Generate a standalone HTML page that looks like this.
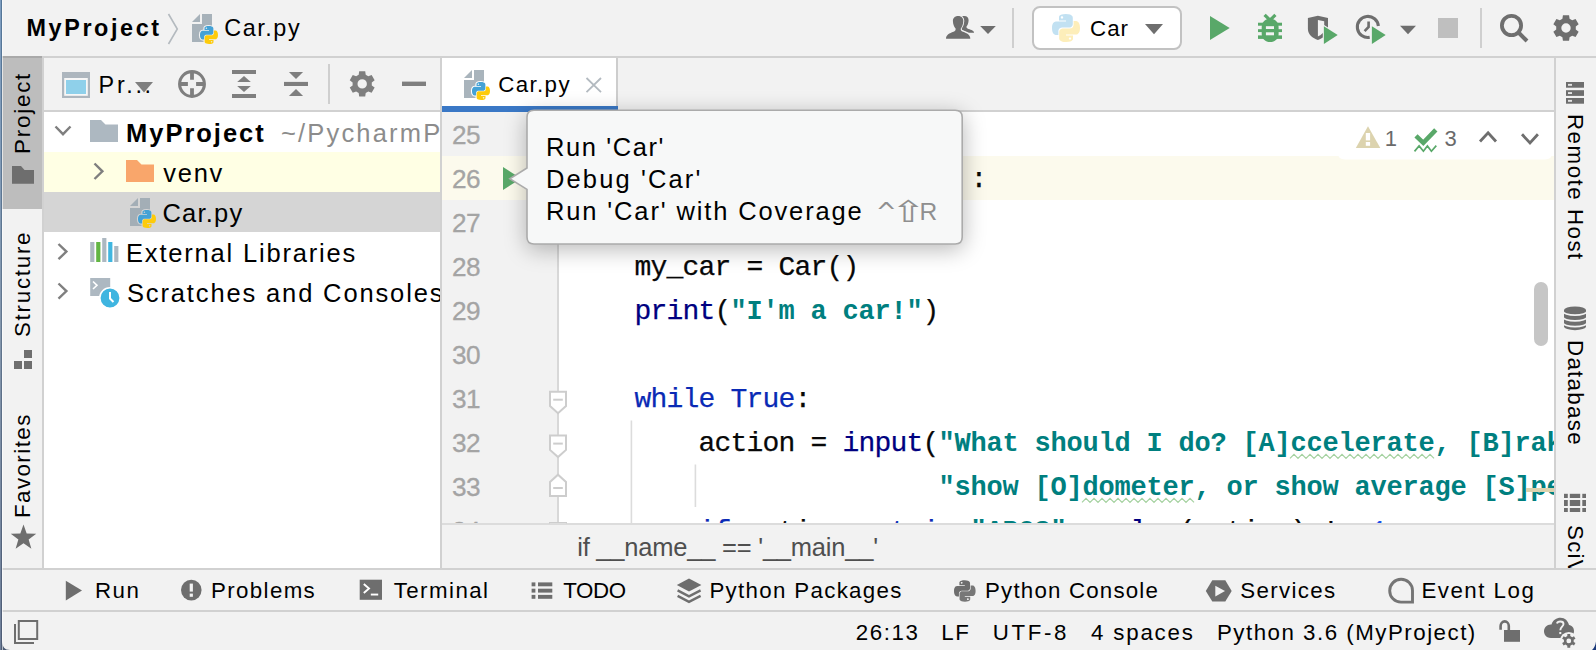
<!DOCTYPE html>
<html>
<head>
<meta charset="utf-8">
<title>Car.py</title>
<style>
*{box-sizing:border-box;margin:0;padding:0}
html,body{width:1596px;height:650px;overflow:hidden;background:#f2f2f2}
body{position:relative;font-family:"Liberation Sans",sans-serif;font-size:25.5px;color:#000}
.abs{position:absolute}
.t{position:absolute;white-space:pre;line-height:60px;height:60px}
svg.layer{position:absolute;left:0;top:0;width:1596px;height:650px;overflow:hidden;pointer-events:none}
#edge{left:0;top:0;width:1px;height:650px;background:linear-gradient(180deg,#7d9dc0,#8497ad 50%,#6f7f99)}
#edge2{left:1px;top:0;width:1px;height:650px;background:linear-gradient(180deg,#557799,#62768e 50%,#4e5c75)}
#edge3{left:2px;top:0;width:1px;height:650px;background:rgba(255,255,255,.6)}
#topline{left:0;top:56px;width:1596px;height:2px;background:#d1d1d1}
#leftline{left:42px;top:58px;width:2px;height:511px;background:#d1d1d1}
#rightline{left:1554px;top:58px;width:2px;height:511px;background:#d1d1d1}
#botline1{left:0;top:568px;width:1596px;height:2px;background:#d1d1d1}
#botline2{left:0;top:610px;width:1596px;height:2px;background:#d1d1d1}
#projtab{left:2px;top:58px;width:40px;height:151px;background:#bdbdbd}
#pp{left:44px;top:58px;width:396px;height:510px;background:#fff;overflow:hidden}
#pphead{left:0;top:0;width:396px;height:54px;background:#f2f2f2;border-bottom:2px solid #d1d1d1}
#ppline{left:440px;top:58px;width:2px;height:510px;background:#d1d1d1}
.row{position:absolute;left:0;width:396px;height:40px}
#ed{left:442px;top:58px;width:1112px;height:466px;background:#fff;overflow:hidden}
#tabs{left:442px;top:58px;width:1112px;height:54px;background:#f2f2f2;border-bottom:2px solid #d1d1d1}
#tab{left:0;top:0;width:176px;height:54px;background:#fff;border-bottom:6px solid #3a78c6}
#tabsep{left:174px;top:0;width:2px;height:48px;background:#cdcdcd}
#gutter{left:0;top:54px;width:117px;height:412px;background:#f2f2f2;border-right:2px solid #d8d8d8}
#curline{left:0;top:98px;width:1112px;height:44px;background:#fcfaed}
#crumbs{left:442px;top:523px;width:1112px;height:45px;background:#f2f2f2;border-top:2px solid #dcdcdc}
#pop{left:528px;top:112px;width:434px;height:131.5px;background:#f7f8f8;border-radius:7px;box-shadow:0 4px 22px 2px rgba(0,0,0,.27)}
#thumb{left:1534px;top:282px;width:14px;height:64px;background:#c6c6c6;border-radius:7px}
#mark{left:1526px;top:488px;width:28px;height:4px;background:#dcd3ae}
.code{position:absolute;left:128.4px;height:44px;line-height:44px;white-space:pre;font-family:"Liberation Mono",monospace;font-size:28px;letter-spacing:-0.8027px;color:#080808;-webkit-text-stroke:0.25px currentColor}
.ln{position:absolute;left:0;height:44px;line-height:44px;white-space:pre;font-family:"Liberation Mono",monospace;font-size:26.67px;color:#a6a6a6}
.kw{color:#0a2ab5}.st{color:#007f7f;font-weight:bold;-webkit-text-stroke:0;font-size:27px;letter-spacing:-0.2026px}.bi{color:#000080}.nu{color:#1750eb}

</style>
</head>
<body>

<div class="abs" id="topline"></div>
<div class="abs" id="projtab"></div><div class="abs" style="left:2px;top:56px;width:40px;height:2px;background:#a9a9a9"></div><div class="abs" id="leftline"></div>
<div class="abs" id="pp"><div class="abs" id="pphead"></div>
<div class="row" style="top:94px;background:#ffffe4"></div>
<div class="row" style="top:134px;background:#d5d5d5"></div>
<span class="t" style="left:54.60px;top:-2.80px;font-size:23.4px;letter-spacing:2.733px;color:#000;">Pr...</span>
<span class="t" style="left:82.00px;top:44.90px;font-size:25.5px;letter-spacing:1.987px;color:#000;font-weight:bold;">MyProject</span>
<span class="t" style="left:236.90px;top:44.90px;font-size:25.5px;letter-spacing:2.189px;color:#8c8c8c;">~/PycharmProjects/MyProject</span>
<span class="t" style="left:119.30px;top:84.90px;font-size:25.5px;letter-spacing:1.700px;color:#000;">venv</span>
<span class="t" style="left:118.40px;top:124.90px;font-size:25.5px;letter-spacing:1.240px;color:#000;">Car.py</span>
<span class="t" style="left:82.00px;top:164.90px;font-size:25.5px;letter-spacing:1.812px;color:#000;">External Libraries</span>
<span class="t" style="left:83.00px;top:204.90px;font-size:25.5px;letter-spacing:1.859px;color:#000;">Scratches and Consoles</span>
</div><div class="abs" id="ppline"></div>
<div class="abs" id="ed"><div class="abs" id="gutter"></div><div class="abs" id="curline"></div>
<span class="t" style="left:10.10px;top:47.20px;font-size:26.2px;letter-spacing:-0.700px;color:#a4a4a4;-webkit-text-stroke:0.3px #a4a4a4;">25</span>
<span class="t" style="left:10.10px;top:91.20px;font-size:26.2px;letter-spacing:-0.700px;color:#a4a4a4;-webkit-text-stroke:0.3px #a4a4a4;">26</span>
<div class="code" style="top:100px"><span class="kw">if</span> __name__ == <span class="st">'__main__<span style="font-weight:normal;position:relative;left:-2px">'</span></span>:</div>
<span class="t" style="left:10.10px;top:135.20px;font-size:26.2px;letter-spacing:-0.700px;color:#a4a4a4;-webkit-text-stroke:0.3px #a4a4a4;">27</span>
<span class="t" style="left:10.10px;top:179.20px;font-size:26.2px;letter-spacing:-0.700px;color:#a4a4a4;-webkit-text-stroke:0.3px #a4a4a4;">28</span>
<div class="code" style="top:188px">    my_car = Car()</div>
<span class="t" style="left:10.10px;top:223.20px;font-size:26.2px;letter-spacing:-0.700px;color:#a4a4a4;-webkit-text-stroke:0.3px #a4a4a4;">29</span>
<div class="code" style="top:232px">    <span class="bi">print</span>(<span class="st">"I'm a car!"</span>)</div>
<span class="t" style="left:10.10px;top:267.20px;font-size:26.2px;letter-spacing:-0.700px;color:#a4a4a4;-webkit-text-stroke:0.3px #a4a4a4;">30</span>
<span class="t" style="left:10.10px;top:311.20px;font-size:26.2px;letter-spacing:-0.700px;color:#a4a4a4;-webkit-text-stroke:0.3px #a4a4a4;">31</span>
<div class="code" style="top:320px">    <span class="kw">while True</span>:</div>
<span class="t" style="left:10.10px;top:355.20px;font-size:26.2px;letter-spacing:-0.700px;color:#a4a4a4;-webkit-text-stroke:0.3px #a4a4a4;">32</span>
<div class="code" style="top:364px">        action = <span class="bi">input</span>(<span class="st">"What should I do? [A]ccelerate, [B]rake, "</span></div>
<span class="t" style="left:10.10px;top:399.20px;font-size:26.2px;letter-spacing:-0.700px;color:#a4a4a4;-webkit-text-stroke:0.3px #a4a4a4;">33</span>
<div class="code" style="top:408px">                       <span class="st">"show [O]dometer, or show average [S]peed?"</span>).upper()</div>
<span class="t" style="left:10.10px;top:443.20px;font-size:26.2px;letter-spacing:-0.700px;color:#a4a4a4;-webkit-text-stroke:0.3px #a4a4a4;">34</span>
<div class="code" style="top:452px">        <span class="kw">if</span> action <span class="kw">not in</span> <span class="st">"ABOS"</span> <span class="kw">or</span> <span class="bi">len</span>(action) != <span class="nu">1</span>:</div>
</div>
<div class="abs" id="tabs"><div class="abs" id="tab"></div><div class="abs" id="tabsep"></div></div>
<span class="t" style="left:498.20px;top:55.00px;font-size:22.3px;letter-spacing:1.380px;color:#000;">Car.py</span>
<div class="abs" id="crumbs"></div>
<span class="t" style="left:577.20px;top:516.70px;font-size:25.5px;letter-spacing:-0.217px;color:#4f4f4f;">if __name__ == '__main__'</span>
<div class="abs" id="thumb"></div><div class="abs" id="mark"></div>
<div class="abs" id="rightline"></div><div class="abs" id="botline1"></div><div class="abs" id="botline2"></div>
<span class="t" style="left:26.50px;top:-2.40px;font-size:23.4px;letter-spacing:2.600px;color:#000;font-weight:bold;">MyProject</span>
<span class="t" style="left:224.30px;top:-2.40px;font-size:23.4px;letter-spacing:1.540px;color:#000;">Car.py</span>
<svg class="layer" viewBox="0 0 1596 650"><defs><clipPath id="edclip"><rect x="442" y="112" width="1112" height="411.5"/></clipPath></defs>
<polyline points="168.5,14 177.3,29 168.5,44" fill="none" stroke="#b4babf" stroke-width="1.6" />
<g fill="#9aa7b0" fill-opacity=".85"><polygon points="202,14 212,14 212,42 192,42 192,24 202,24"/><polygon points="192,22 200,14 200,22"/></g><g transform="translate(198.71,24.71) scale(1.2857)" fill-rule="evenodd"><path d="M7.9,1 C4.3,1 4.5,2.6 4.5,2.6 L4.5,4.2 L8,4.2 L8,4.7 L3.2,4.7 C3.2,4.7 1,4.4 1,8 C1,11.6 3,11.5 3,11.5 L4.2,11.5 L4.2,9.8 C4.2,9.8 4.1,7.8 6.1,7.8 L9.5,7.8 C9.5,7.8 11.4,7.8 11.4,6 L11.4,2.9 C11.4,2.9 11.7,1 7.9,1 Z M6,2.1 C6.3,2.1 6.6,2.4 6.6,2.7 C6.6,3.1 6.3,3.3 6,3.3 C5.6,3.3 5.4,3.1 5.4,2.7 C5.4,2.4 5.6,2.1 6,2.1 Z" fill="#f2f2f2" stroke="#f2f2f2" stroke-width="1.71"/><path d="M8.1,15 C11.7,15 11.5,13.4 11.5,13.4 L11.5,11.8 L8,11.8 L8,11.3 L12.8,11.3 C12.8,11.3 15,11.6 15,8 C15,4.4 13,4.5 13,4.5 L11.8,4.5 L11.8,6.2 C11.8,6.2 11.9,8.2 9.9,8.2 L6.5,8.2 C6.5,8.2 4.6,8.2 4.6,10 L4.6,13.1 C4.6,13.1 4.3,15 8.1,15 Z M10,13.9 C9.7,13.9 9.4,13.6 9.4,13.3 C9.4,12.9 9.7,12.7 10,12.7 C10.4,12.7 10.6,12.9 10.6,13.3 C10.6,13.6 10.4,13.9 10,13.9 Z" fill="#f2f2f2" stroke="#f2f2f2" stroke-width="1.71"/><path d="M7.9,1 C4.3,1 4.5,2.6 4.5,2.6 L4.5,4.2 L8,4.2 L8,4.7 L3.2,4.7 C3.2,4.7 1,4.4 1,8 C1,11.6 3,11.5 3,11.5 L4.2,11.5 L4.2,9.8 C4.2,9.8 4.1,7.8 6.1,7.8 L9.5,7.8 C9.5,7.8 11.4,7.8 11.4,6 L11.4,2.9 C11.4,2.9 11.7,1 7.9,1 Z M6,2.1 C6.3,2.1 6.6,2.4 6.6,2.7 C6.6,3.1 6.3,3.3 6,3.3 C5.6,3.3 5.4,3.1 5.4,2.7 C5.4,2.4 5.6,2.1 6,2.1 Z" fill="#44a2d6"/><path d="M8.1,15 C11.7,15 11.5,13.4 11.5,13.4 L11.5,11.8 L8,11.8 L8,11.3 L12.8,11.3 C12.8,11.3 15,11.6 15,8 C15,4.4 13,4.5 13,4.5 L11.8,4.5 L11.8,6.2 C11.8,6.2 11.9,8.2 9.9,8.2 L6.5,8.2 C6.5,8.2 4.6,8.2 4.6,10 L4.6,13.1 C4.6,13.1 4.3,15 8.1,15 Z M10,13.9 C9.7,13.9 9.4,13.6 9.4,13.3 C9.4,12.9 9.7,12.7 10,12.7 C10.4,12.7 10.6,12.9 10.6,13.3 C10.6,13.6 10.4,13.9 10,13.9 Z" fill="#fdcb0b"/></g>
<path d="M962,16.4 C966.5,15.3 968.8,17.5 968.6,20.5 C968.4,23.5 967.5,25.5 966.5,26.5 C966.3,28 967,28.4 968.5,29 C971.5,30 974.1,30.8 974.1,32.7 L969,32.7 L960,29 Z" fill="#6e6e6e"/><path d="M958.2,16 C961.5,16 963.4,18.2 963.3,21 C963.2,24.5 962,27 960.8,28.5 C960.5,30.5 961.2,31 963,31.8 C967,33.3 970.3,34.8 970.3,38.7 L946,38.7 C946,34.8 949.5,33.3 953.5,31.8 C955.2,31 955.8,30.5 955.6,28.5 C954.2,27 953,24.5 952.9,21 C952.8,18.2 954.8,16 958.2,16 Z" fill="#f2f2f2" stroke="#f2f2f2" stroke-width="2"/><path d="M958.2,16 C961.5,16 963.4,18.2 963.3,21 C963.2,24.5 962,27 960.8,28.5 C960.5,30.5 961.2,31 963,31.8 C967,33.3 970.3,34.8 970.3,38.7 L946,38.7 C946,34.8 949.5,33.3 953.5,31.8 C955.2,31 955.8,30.5 955.6,28.5 C954.2,27 953,24.5 952.9,21 C952.8,18.2 954.8,16 958.2,16 Z" fill="#6e6e6e"/>
<polygon points="980.2,26 995.8,26 988,33.9" fill="#6e6e6e" />
<rect x="1012" y="8" width="2" height="40" fill="#cfcfcf" />
<rect x="1033" y="7" width="148" height="42" rx="7" fill="#fff" stroke="#c2c2c2" stroke-width="2"/>
<g transform="translate(1050.00,12.00) scale(2.0000)" fill-rule="evenodd"><path d="M7.9,1 C4.3,1 4.5,2.6 4.5,2.6 L4.5,4.2 L8,4.2 L8,4.7 L3.2,4.7 C3.2,4.7 1,4.4 1,8 C1,11.6 3,11.5 3,11.5 L4.2,11.5 L4.2,9.8 C4.2,9.8 4.1,7.8 6.1,7.8 L9.5,7.8 C9.5,7.8 11.4,7.8 11.4,6 L11.4,2.9 C11.4,2.9 11.7,1 7.9,1 Z M6,2.1 C6.3,2.1 6.6,2.4 6.6,2.7 C6.6,3.1 6.3,3.3 6,3.3 C5.6,3.3 5.4,3.1 5.4,2.7 C5.4,2.4 5.6,2.1 6,2.1 Z" fill="#c2e1f2"/><path d="M8.1,15 C11.7,15 11.5,13.4 11.5,13.4 L11.5,11.8 L8,11.8 L8,11.3 L12.8,11.3 C12.8,11.3 15,11.6 15,8 C15,4.4 13,4.5 13,4.5 L11.8,4.5 L11.8,6.2 C11.8,6.2 11.9,8.2 9.9,8.2 L6.5,8.2 C6.5,8.2 4.6,8.2 4.6,10 L4.6,13.1 C4.6,13.1 4.3,15 8.1,15 Z M10,13.9 C9.7,13.9 9.4,13.6 9.4,13.3 C9.4,12.9 9.7,12.7 10,12.7 C10.4,12.7 10.6,12.9 10.6,13.3 C10.6,13.6 10.4,13.9 10,13.9 Z" fill="#fdeeba"/></g>
<polygon points="1145,24 1163,24 1154,34.2" fill="#6e6e6e" />
<polygon points="1210,16 1229.7,28 1210,40" fill="#59a869" />
<g fill="#59a869"><path d="M1264.6,14.8 L1270,20.2 M1275.4,14.8 L1270,20.2" stroke="#59a869" stroke-width="3.2" fill="none"/><path d="M1261.7,27 C1261.7,22 1265.4,18.7 1270.1,18.7 C1274.9,18.7 1278.6,22 1278.6,27 L1278.6,34 C1278.6,38.7 1274.9,42.1 1270.1,42.1 C1265.4,42.1 1261.7,38.7 1261.7,34Z"/><rect x="1258" y="22.7" width="24" height="3"/><rect x="1258" y="29.2" width="24" height="2.9"/><rect x="1258" y="35.4" width="24" height="3.5"/></g><rect x="1265.9" y="26.2" width="8.1" height="2.8" fill="#f2f2f2"/><rect x="1265.9" y="32.3" width="8.1" height="3" fill="#f2f2f2"/>
<path fill-rule="evenodd" d="M1307.9,18 L1317.9,15.8 L1328,18 L1328,29 C1328,34.5 1323,38.3 1317.9,40 C1312.8,38.3 1307.9,34.5 1307.9,29 Z M1317.9,19.9 L1324.2,21.2 L1324.2,29 C1324.2,32.5 1321.5,35 1317.9,36.4 Z" fill="#6e6e6e"/>
<polygon points="1323.9,26.2 1337.7,35 1323.9,44" fill="#59a869" stroke="#f2f2f2" stroke-width="2.2" paint-order="stroke"/>
<path d="M1378.4,26 A10.55,10.55 0 1 0 1369.7,37.3" fill="none" stroke="#6e6e6e" stroke-width="3.1"/>
<polyline points="1368.6,21.5 1368.6,27 1364.6,31.2" fill="none" stroke="#6e6e6e" stroke-width="2.6" />
<polygon points="1371.9,26.2 1385.7,35 1371.9,44" fill="#59a869" stroke="#f2f2f2" stroke-width="2.2" paint-order="stroke"/>
<polygon points="1400,25.7 1416,25.7 1408,34.2" fill="#6e6e6e" />
<rect x="1438" y="18" width="20" height="20" fill="#bfbfbf" />
<rect x="1480" y="8" width="2" height="40" fill="#cfcfcf" />
<circle cx="1511.5" cy="25.5" r="9.6" fill="none" stroke="#6e6e6e" stroke-width="3.8"/><line x1="1518.5" y1="32.5" x2="1527" y2="41" stroke="#6e6e6e" stroke-width="4"/>
<path d="M1569.58,18.77 L1569.07,15.16 L1562.93,15.16 L1562.42,18.77 L1559.80,20.28 L1556.42,18.92 L1553.35,24.24 L1556.22,26.49 L1556.22,29.51 L1553.35,31.76 L1556.42,37.08 L1559.80,35.72 L1562.42,37.23 L1562.93,40.84 L1569.07,40.84 L1569.58,37.23 L1572.20,35.72 L1575.58,37.08 L1578.65,31.76 L1575.78,29.51 L1575.78,26.49 L1578.65,24.24 L1575.58,18.92 L1572.20,20.28Z M1561.30,28.00 a4.7,4.7 0 1,0 9.4,0 a4.7,4.7 0 1,0 -9.4,0Z" fill="#6e6e6e" fill-rule="evenodd"/>
<rect x="62" y="72" width="28" height="26" fill="#adb6be" /><rect x="64.2" y="78" width="23.6" height="17.8" fill="#f7f7f7" /><rect x="66" y="80" width="20" height="14" fill="#8fd0ea" />
<polygon points="135,82 153,82 144,92.5" fill="#7f7f7f" />
<circle cx="192" cy="84" r="12.4" fill="none" stroke="#7f7f7f" stroke-width="3.1"/><path d="M192,72 V79.7 M192,96 V88.3 M180,84 H187.9 M204,84 H196.1" stroke="#7f7f7f" stroke-width="3.8"/>
<rect x="232" y="70" width="24" height="4" fill="#7f7f7f" /><rect x="232" y="94" width="24" height="4" fill="#7f7f7f" /><polygon points="244,75.9 250.8,81.9 237.2,81.9" fill="#7f7f7f" /><polygon points="237.2,86 250.8,86 244,92.1" fill="#7f7f7f" />
<rect x="284" y="81.9" width="24" height="4.1" fill="#7f7f7f" /><polygon points="288.9,71.9 303.1,71.9 296,79.1" fill="#7f7f7f" /><polygon points="296,89.1 303.1,96 288.9,96" fill="#7f7f7f" />
<rect x="328" y="64" width="2" height="40" fill="#cfcfcf" />
<path d="M365.71,74.86 L365.23,71.26 L359.17,71.26 L358.69,74.86 L356.12,76.34 L352.76,74.96 L349.74,80.20 L352.61,82.42 L352.61,85.38 L349.74,87.60 L352.76,92.84 L356.12,91.46 L358.69,92.94 L359.17,96.54 L365.23,96.54 L365.71,92.94 L368.28,91.46 L371.64,92.84 L374.66,87.60 L371.79,85.38 L371.79,82.42 L374.66,80.20 L371.64,74.96 L368.28,76.34Z M357.50,83.90 a4.7,4.7 0 1,0 9.4,0 a4.7,4.7 0 1,0 -9.4,0Z" fill="#7f7f7f" fill-rule="evenodd"/>
<rect x="402" y="81.6" width="24" height="4.4" fill="#7f7f7f" />
<polyline points="55.5,126.5 63,134.2 70.5,126.5" fill="none" stroke="#7f7f7f" stroke-width="2.4" />
<path d="M90,120 L101,120 L105.5,124.6 L118,124.6 L118,142 L90,142Z" fill="#adb8c1"/>
<polyline points="94.5,163.5 102.4,171.3 94.5,179" fill="none" stroke="#7f7f7f" stroke-width="2.4" />
<path d="M126,160 L137,160 L141.5,164.6 L154,164.6 L154,182 L126,182Z" fill="#f9a66b"/>
<g fill="#9aa7b0" fill-opacity=".85"><polygon points="140,198 150,198 150,226 130,226 130,208 140,208"/><polygon points="130,206 138,198 138,206"/></g><g transform="translate(136.71,208.71) scale(1.2857)" fill-rule="evenodd"><path d="M7.9,1 C4.3,1 4.5,2.6 4.5,2.6 L4.5,4.2 L8,4.2 L8,4.7 L3.2,4.7 C3.2,4.7 1,4.4 1,8 C1,11.6 3,11.5 3,11.5 L4.2,11.5 L4.2,9.8 C4.2,9.8 4.1,7.8 6.1,7.8 L9.5,7.8 C9.5,7.8 11.4,7.8 11.4,6 L11.4,2.9 C11.4,2.9 11.7,1 7.9,1 Z M6,2.1 C6.3,2.1 6.6,2.4 6.6,2.7 C6.6,3.1 6.3,3.3 6,3.3 C5.6,3.3 5.4,3.1 5.4,2.7 C5.4,2.4 5.6,2.1 6,2.1 Z" fill="#d5d5d5" stroke="#d5d5d5" stroke-width="1.71"/><path d="M8.1,15 C11.7,15 11.5,13.4 11.5,13.4 L11.5,11.8 L8,11.8 L8,11.3 L12.8,11.3 C12.8,11.3 15,11.6 15,8 C15,4.4 13,4.5 13,4.5 L11.8,4.5 L11.8,6.2 C11.8,6.2 11.9,8.2 9.9,8.2 L6.5,8.2 C6.5,8.2 4.6,8.2 4.6,10 L4.6,13.1 C4.6,13.1 4.3,15 8.1,15 Z M10,13.9 C9.7,13.9 9.4,13.6 9.4,13.3 C9.4,12.9 9.7,12.7 10,12.7 C10.4,12.7 10.6,12.9 10.6,13.3 C10.6,13.6 10.4,13.9 10,13.9 Z" fill="#d5d5d5" stroke="#d5d5d5" stroke-width="1.71"/><path d="M7.9,1 C4.3,1 4.5,2.6 4.5,2.6 L4.5,4.2 L8,4.2 L8,4.7 L3.2,4.7 C3.2,4.7 1,4.4 1,8 C1,11.6 3,11.5 3,11.5 L4.2,11.5 L4.2,9.8 C4.2,9.8 4.1,7.8 6.1,7.8 L9.5,7.8 C9.5,7.8 11.4,7.8 11.4,6 L11.4,2.9 C11.4,2.9 11.7,1 7.9,1 Z M6,2.1 C6.3,2.1 6.6,2.4 6.6,2.7 C6.6,3.1 6.3,3.3 6,3.3 C5.6,3.3 5.4,3.1 5.4,2.7 C5.4,2.4 5.6,2.1 6,2.1 Z" fill="#44a2d6"/><path d="M8.1,15 C11.7,15 11.5,13.4 11.5,13.4 L11.5,11.8 L8,11.8 L8,11.3 L12.8,11.3 C12.8,11.3 15,11.6 15,8 C15,4.4 13,4.5 13,4.5 L11.8,4.5 L11.8,6.2 C11.8,6.2 11.9,8.2 9.9,8.2 L6.5,8.2 C6.5,8.2 4.6,8.2 4.6,10 L4.6,13.1 C4.6,13.1 4.3,15 8.1,15 Z M10,13.9 C9.7,13.9 9.4,13.6 9.4,13.3 C9.4,12.9 9.7,12.7 10,12.7 C10.4,12.7 10.6,12.9 10.6,13.3 C10.6,13.6 10.4,13.9 10,13.9 Z" fill="#fdcb0b"/></g>
<polyline points="58.5,244 66.4,251.6 58.5,259.2" fill="none" stroke="#7f7f7f" stroke-width="2.4" />
<polyline points="58.5,283.5 66.4,291.1 58.5,298.7" fill="none" stroke="#7f7f7f" stroke-width="2.4" />
<rect x="90.2" y="242" width="4.2" height="20" fill="#adb8c1" /><rect x="96.2" y="242" width="4.2" height="20" fill="#62b543" /><rect x="102.2" y="238" width="4.2" height="24" fill="#adb8c1" /><rect x="108.2" y="242" width="4.2" height="20" fill="#40b6e0" /><rect x="114.2" y="246" width="4.2" height="16" fill="#adb8c1" />
<rect x="90.2" y="278" width="20" height="18" fill="#adb8c1" /><polyline points="93,281.5 97,285.3 93,289" fill="none" stroke="#fff" stroke-width="1.6" />
<circle cx="110" cy="298" r="10.2" fill="#3fb5e0" stroke="#fff" stroke-width="1.6"/><polyline points="110,292 110,298.5 113.5,302" fill="none" stroke="#fff" stroke-width="2" />
<g fill="#9aa7b0" fill-opacity=".85"><polygon points="474,70 484,70 484,98 464,98 464,80 474,80"/><polygon points="464,78 472,70 472,78"/></g><g transform="translate(470.71,80.71) scale(1.2857)" fill-rule="evenodd"><path d="M7.9,1 C4.3,1 4.5,2.6 4.5,2.6 L4.5,4.2 L8,4.2 L8,4.7 L3.2,4.7 C3.2,4.7 1,4.4 1,8 C1,11.6 3,11.5 3,11.5 L4.2,11.5 L4.2,9.8 C4.2,9.8 4.1,7.8 6.1,7.8 L9.5,7.8 C9.5,7.8 11.4,7.8 11.4,6 L11.4,2.9 C11.4,2.9 11.7,1 7.9,1 Z M6,2.1 C6.3,2.1 6.6,2.4 6.6,2.7 C6.6,3.1 6.3,3.3 6,3.3 C5.6,3.3 5.4,3.1 5.4,2.7 C5.4,2.4 5.6,2.1 6,2.1 Z" fill="#fff" stroke="#fff" stroke-width="1.71"/><path d="M8.1,15 C11.7,15 11.5,13.4 11.5,13.4 L11.5,11.8 L8,11.8 L8,11.3 L12.8,11.3 C12.8,11.3 15,11.6 15,8 C15,4.4 13,4.5 13,4.5 L11.8,4.5 L11.8,6.2 C11.8,6.2 11.9,8.2 9.9,8.2 L6.5,8.2 C6.5,8.2 4.6,8.2 4.6,10 L4.6,13.1 C4.6,13.1 4.3,15 8.1,15 Z M10,13.9 C9.7,13.9 9.4,13.6 9.4,13.3 C9.4,12.9 9.7,12.7 10,12.7 C10.4,12.7 10.6,12.9 10.6,13.3 C10.6,13.6 10.4,13.9 10,13.9 Z" fill="#fff" stroke="#fff" stroke-width="1.71"/><path d="M7.9,1 C4.3,1 4.5,2.6 4.5,2.6 L4.5,4.2 L8,4.2 L8,4.7 L3.2,4.7 C3.2,4.7 1,4.4 1,8 C1,11.6 3,11.5 3,11.5 L4.2,11.5 L4.2,9.8 C4.2,9.8 4.1,7.8 6.1,7.8 L9.5,7.8 C9.5,7.8 11.4,7.8 11.4,6 L11.4,2.9 C11.4,2.9 11.7,1 7.9,1 Z M6,2.1 C6.3,2.1 6.6,2.4 6.6,2.7 C6.6,3.1 6.3,3.3 6,3.3 C5.6,3.3 5.4,3.1 5.4,2.7 C5.4,2.4 5.6,2.1 6,2.1 Z" fill="#44a2d6"/><path d="M8.1,15 C11.7,15 11.5,13.4 11.5,13.4 L11.5,11.8 L8,11.8 L8,11.3 L12.8,11.3 C12.8,11.3 15,11.6 15,8 C15,4.4 13,4.5 13,4.5 L11.8,4.5 L11.8,6.2 C11.8,6.2 11.9,8.2 9.9,8.2 L6.5,8.2 C6.5,8.2 4.6,8.2 4.6,10 L4.6,13.1 C4.6,13.1 4.3,15 8.1,15 Z M10,13.9 C9.7,13.9 9.4,13.6 9.4,13.3 C9.4,12.9 9.7,12.7 10,12.7 C10.4,12.7 10.6,12.9 10.6,13.3 C10.6,13.6 10.4,13.9 10,13.9 Z" fill="#fdcb0b"/></g>
<path d="M586.5,78 L601,92.2 M601,78 L586.5,92.2" stroke="#b3bac0" stroke-width="1.8" fill="none"/>
<polygon points="503,167 521,178.5 503,190" fill="#59a869" />
<g clip-path="url(#edclip)">
<path d="M550,391.7 L566,391.7 L566,406.0 L558,413.2 L550,406.0Z" fill="#fff" stroke="#cdcdcd" stroke-width="2"/><line x1="553.2" y1="399.7" x2="562.8" y2="399.7" stroke="#cdcdcd" stroke-width="2"/><path d="M550,435.6 L566,435.6 L566,449.90000000000003 L558,457.1 L550,449.90000000000003Z" fill="#fff" stroke="#cdcdcd" stroke-width="2"/><line x1="553.2" y1="443.6" x2="562.8" y2="443.6" stroke="#cdcdcd" stroke-width="2"/><path d="M550,496 L566,496 L566,482 L558,474.7 L550,482Z" fill="#fff" stroke="#cdcdcd" stroke-width="2"/><line x1="553.2" y1="488" x2="562.8" y2="488" stroke="#cdcdcd" stroke-width="2"/><path d="M550,523 L566,523 L566,537.3 L558,544.5 L550,537.3Z" fill="#fff" stroke="#cdcdcd" stroke-width="2"/><line x1="553.2" y1="531" x2="562.8" y2="531" stroke="#cdcdcd" stroke-width="2"/>
<rect x="630.6" y="420.5" width="1.6" height="103" fill="#dcdcdc" /><rect x="694.6" y="464.5" width="1.6" height="42.5" fill="#dcdcdc" />
<polyline points="1290,458.4 1294,454.4 1298,458.4 1302,454.4 1306,458.4 1310,454.4 1314,458.4 1318,454.4 1322,458.4 1326,454.4 1330,458.4 1334,454.4 1338,458.4 1342,454.4 1346,458.4 1350,454.4 1354,458.4 1358,454.4 1362,458.4 1366,454.4 1370,458.4 1374,454.4 1378,458.4 1382,454.4 1386,458.4 1390,454.4 1394,458.4 1398,454.4 1402,458.4 1406,454.4 1410,458.4 1414,454.4 1418,458.4 1422,454.4 1426,458.4 1430,454.4 1434,458.4" fill="none" stroke="#a5d2a0" stroke-width="1.2" />
<polyline points="1082,502.4 1086,498.4 1090,502.4 1094,498.4 1098,502.4 1102,498.4 1106,502.4 1110,498.4 1114,502.4 1118,498.4 1122,502.4 1126,498.4 1130,502.4 1134,498.4 1138,502.4 1142,498.4 1146,502.4 1150,498.4 1154,502.4 1158,498.4 1162,502.4 1166,498.4 1170,502.4 1174,498.4 1178,502.4 1182,498.4 1186,502.4 1190,498.4 1194,502.4" fill="none" stroke="#a5d2a0" stroke-width="1.2" />
</g>
<path d="M1338,112 L1552,112 L1552,153 Q1552,159.5 1545,159.5 L1345,159.5 Q1338,159.5 1338,153Z" fill="#fff"/>
<polygon points="1368,126.2 1380.3,147.9 1355.8,147.9" fill="#dcd3ae" />
<rect x="1365.8" y="133" width="4.3" height="7.4" fill="#fff" /><rect x="1365.8" y="142" width="4.3" height="3.8" fill="#fff" />
<polyline points="1416,135.9 1423.3,142.8 1435.8,129.9" fill="none" stroke="#59a869" stroke-width="4.6" />
<polyline points="1414.5,151.4 1419.1,145.9 1423.4,151.2 1427.4,145.9 1431.4,151.2 1436.3,145.6" fill="none" stroke="#59a869" stroke-width="1.7" />
<polyline points="1480,141.5 1488.1,132.8 1496,141.5" fill="none" stroke="#6e6e6e" stroke-width="2.8" />
<polyline points="1522,134.3 1530,143 1537.9,134.3" fill="none" stroke="#6e6e6e" stroke-width="2.8" />
<path d="M12,166 L21,166 L24.5,170 L34,170 L34,183.8 L12,183.8Z" fill="#6e6e6e"/>
<rect x="14" y="361" width="8" height="8" fill="#6e6e6e" /><rect x="24" y="361" width="8" height="8" fill="#6e6e6e" /><rect x="24" y="350" width="8" height="8" fill="#6e6e6e" />
<polygon points="23.5,524.4 26.67,533.43 36.24,533.66 28.64,539.47 31.38,548.64 23.5,543.2 15.62,548.64 18.36,539.47 10.76,533.66 20.33,533.43" fill="#6e6e6e" />
<rect x="1566" y="82" width="18" height="5.7" fill="#6e6e6e" /><rect x="1568" y="83.9" width="4" height="1.9" fill="#e4e4e4" />
<rect x="1566" y="90.2" width="18" height="5.7" fill="#6e6e6e" /><rect x="1568" y="92.10000000000001" width="4" height="1.9" fill="#e4e4e4" />
<rect x="1566" y="98" width="18" height="5.7" fill="#6e6e6e" /><rect x="1568" y="99.9" width="4" height="1.9" fill="#e4e4e4" />
<path d="M1564,310 L1564,326.5 A11,3.7 0 0 0 1586,326.5 L1586,310Z" fill="#6e6e6e"/><ellipse cx="1575" cy="309.9" rx="11" ry="3.5" fill="#6e6e6e"/>
<path d="M1563,311.2 A12,3.9 0 0 0 1587,311.2" fill="none" stroke="#f2f2f2" stroke-width="1.7"/>
<path d="M1563,317.0 A12,3.9 0 0 0 1587,317.0" fill="none" stroke="#f2f2f2" stroke-width="1.7"/>
<path d="M1563,322.8 A12,3.9 0 0 0 1587,322.8" fill="none" stroke="#f2f2f2" stroke-width="1.7"/>
<rect x="1564" y="493.8" width="3.8" height="4.2" fill="#6e6e6e" />
<rect x="1564" y="500" width="3.8" height="6" fill="#6e6e6e" />
<rect x="1564" y="508" width="3.8" height="4" fill="#6e6e6e" />
<rect x="1569.8" y="493.8" width="10.4" height="4.2" fill="#6e6e6e" />
<rect x="1569.8" y="500" width="10.4" height="6" fill="#6e6e6e" />
<rect x="1569.8" y="508" width="10.4" height="4" fill="#6e6e6e" />
<rect x="1582.3" y="493.8" width="3.7" height="4.2" fill="#6e6e6e" />
<rect x="1582.3" y="500" width="3.7" height="6" fill="#6e6e6e" />
<rect x="1582.3" y="508" width="3.7" height="4" fill="#6e6e6e" />
<polygon points="65.8,580.8 82,590.6 65.8,600.5" fill="#6e6e6e" />
<circle cx="191.3" cy="590.1" r="10.3" fill="#6e6e6e"/><rect x="189.7" y="583.6" width="3.2" height="8" fill="#f2f2f2" /><rect x="189.7" y="593.6" width="3.2" height="3.2" fill="#f2f2f2" />
<rect x="359.7" y="579.7" width="22.3" height="20.1" fill="#6e6e6e" /><polyline points="363.8,584 369,588.5 363.8,593" fill="none" stroke="#fff" stroke-width="1.9" /><rect x="370.8" y="593.6" width="7.4" height="1.9" fill="#fff" />
<rect x="531.6" y="582.4" width="3.8" height="3.9" fill="#6e6e6e" /><rect x="538" y="582.4" width="14.3" height="3.9" fill="#6e6e6e" />
<rect x="531.6" y="588.7" width="3.8" height="3.9" fill="#6e6e6e" /><rect x="538" y="588.7" width="14.3" height="3.9" fill="#6e6e6e" />
<rect x="531.6" y="594.9" width="3.8" height="3.9" fill="#6e6e6e" /><rect x="538" y="594.9" width="14.3" height="3.9" fill="#6e6e6e" />
<polygon points="689,578.6 701.4,585 689,591.4 676.8,585" fill="#6e6e6e" />
<polyline points="677.6,590.4 689,596.3 700.6,590.4" fill="none" stroke="#6e6e6e" stroke-width="2.4" /><polyline points="677.6,595.9 689,601.8 700.6,595.9" fill="none" stroke="#6e6e6e" stroke-width="2.4" />
<g transform="translate(952.46,578.66) scale(1.5429)" fill-rule="evenodd"><path d="M7.9,1 C4.3,1 4.5,2.6 4.5,2.6 L4.5,4.2 L8,4.2 L8,4.7 L3.2,4.7 C3.2,4.7 1,4.4 1,8 C1,11.6 3,11.5 3,11.5 L4.2,11.5 L4.2,9.8 C4.2,9.8 4.1,7.8 6.1,7.8 L9.5,7.8 C9.5,7.8 11.4,7.8 11.4,6 L11.4,2.9 C11.4,2.9 11.7,1 7.9,1 Z M6,2.1 C6.3,2.1 6.6,2.4 6.6,2.7 C6.6,3.1 6.3,3.3 6,3.3 C5.6,3.3 5.4,3.1 5.4,2.7 C5.4,2.4 5.6,2.1 6,2.1 Z" fill="#6e6e6e"/><path d="M8.1,15 C11.7,15 11.5,13.4 11.5,13.4 L11.5,11.8 L8,11.8 L8,11.3 L12.8,11.3 C12.8,11.3 15,11.6 15,8 C15,4.4 13,4.5 13,4.5 L11.8,4.5 L11.8,6.2 C11.8,6.2 11.9,8.2 9.9,8.2 L6.5,8.2 C6.5,8.2 4.6,8.2 4.6,10 L4.6,13.1 C4.6,13.1 4.3,15 8.1,15 Z M10,13.9 C9.7,13.9 9.4,13.6 9.4,13.3 C9.4,12.9 9.7,12.7 10,12.7 C10.4,12.7 10.6,12.9 10.6,13.3 C10.6,13.6 10.4,13.9 10,13.9 Z" fill="#777"/></g>
<polygon points="1205.8,591 1212.3,580.2 1225.3,580.2 1231.7,591 1225.3,601.6 1212.3,601.6" fill="#6e6e6e" /><polygon points="1215.3,585.8 1225,591.1 1215.3,596.5" fill="#f2f2f2" />
<path d="M1412.5,602.1 L1401,602.1 A11.4,11.4 0 1 1 1412.5,590.6Z" fill="none" stroke="#757575" stroke-width="2.9"/>
<rect x="18.8" y="621" width="18.4" height="18" fill="none" stroke="#6e6e6e" stroke-width="2"/><polyline points="15,624 15,643 34,643" fill="none" stroke="#6e6e6e" stroke-width="2" />
<rect x="1504" y="630" width="16" height="11.8" fill="#6e6e6e" /><path d="M1500.6,629.8 L1500.6,626 A4.1,4.6 0 0 1 1508.8,626 L1508.8,631" fill="none" stroke="#6e6e6e" stroke-width="2.6"/>
<path d="M1551,638 C1545.5,638 1544,633.5 1544,631.5 C1544,627 1547.5,624 1551.5,624.5 C1553,620 1556.5,617.8 1560.5,617.8 C1565,617.8 1568,621 1569,625 C1572,625.3 1574,628 1574,631 C1574,635 1571,638 1567.5,638Z" fill="#6e6e6e"/>
<path d="M1557,623.5 C1557.5,621 1563.5,620.6 1563.5,624 C1563.5,626.5 1560.3,627 1560.3,630.3" fill="none" stroke="#f2f2f2" stroke-width="1.9"/><rect x="1559.3" y="632" width="2" height="2.1" fill="#f2f2f2"/>
<circle cx="1568.8" cy="640.9" r="9" fill="#f2f2f2"/><path d="M1570.28,636.12 L1570.26,634.05 L1567.34,634.05 L1567.32,636.12 L1565.40,637.23 L1563.60,636.21 L1562.14,638.74 L1563.92,639.79 L1563.92,642.01 L1562.14,643.06 L1563.60,645.59 L1565.40,644.57 L1567.32,645.68 L1567.34,647.75 L1570.26,647.75 L1570.28,645.68 L1572.20,644.57 L1574.00,645.59 L1575.46,643.06 L1573.68,642.01 L1573.68,639.79 L1575.46,638.74 L1574.00,636.21 L1572.20,637.23Z M1566.40,640.90 a2.4,2.4 0 1,0 4.8,0 a2.4,2.4 0 1,0 -4.8,0Z" fill="#6e6e6e" fill-rule="evenodd"/>
<path d="M0,640 L0,650 L10,650 C5,650 2,647 2,640Z" fill="#4d5b73"/>
<path d="M1596,641.5 L1596,650 L1592,650 C1594,648 1595.5,645.5 1596,641.5Z" fill="#1b3a7a"/>
</svg>
<span class="t" style="left:1090.10px;top:-1.20px;font-size:22.3px;letter-spacing:0.950px;color:#000;">Car</span>
<span class="t" style="left:1384.80px;top:108.80px;font-size:22px;letter-spacing:0.000px;color:#6a6a6a;">1</span>
<span class="t" style="left:1444.40px;top:109.00px;font-size:22px;letter-spacing:0.000px;color:#6a6a6a;">3</span>
<span class="t" style="left:-6.60px;top:154.20px;font-size:22.3px;letter-spacing:1.817px;color:#000;transform-origin:0 0;transform:rotate(-90deg);">Project</span>
<span class="t" style="left:-6.60px;top:337.00px;font-size:22.3px;letter-spacing:1.750px;color:#000;transform-origin:0 0;transform:rotate(-90deg);">Structure</span>
<span class="t" style="left:-6.60px;top:517.60px;font-size:22.3px;letter-spacing:1.450px;color:#000;transform-origin:0 0;transform:rotate(-90deg);">Favorites</span>
<span class="t" style="left:1604.70px;top:113.60px;font-size:22.3px;letter-spacing:1.520px;color:#000;transform-origin:0 0;transform:rotate(90deg);">Remote Host</span>
<span class="t" style="left:1604.70px;top:339.80px;font-size:22.3px;letter-spacing:1.300px;color:#000;transform-origin:0 0;transform:rotate(90deg);">Database</span>
<div class="abs" style="left:1556px;top:500px;width:40px;height:68px;overflow:hidden">
<span class="t" style="left:48.70px;top:24.70px;font-size:22.3px;letter-spacing:1.300px;transform-origin:0 0;transform:rotate(90deg)">SciView</span></div>
<span class="t" style="left:94.90px;top:561.10px;font-size:22.3px;letter-spacing:1.550px;color:#000;">Run</span>
<span class="t" style="left:211.00px;top:561.10px;font-size:22.3px;letter-spacing:1.371px;color:#000;">Problems</span>
<span class="t" style="left:393.70px;top:561.10px;font-size:22.3px;letter-spacing:1.443px;color:#000;">Terminal</span>
<span class="t" style="left:563.20px;top:561.10px;font-size:22.3px;letter-spacing:-0.333px;color:#000;">TODO</span>
<span class="t" style="left:709.40px;top:561.10px;font-size:22.3px;letter-spacing:1.321px;color:#000;">Python Packages</span>
<span class="t" style="left:985.00px;top:561.10px;font-size:22.3px;letter-spacing:1.192px;color:#000;">Python Console</span>
<span class="t" style="left:1240.30px;top:561.10px;font-size:22.3px;letter-spacing:1.329px;color:#000;">Services</span>
<span class="t" style="left:1421.40px;top:561.10px;font-size:22.3px;letter-spacing:1.500px;color:#000;">Event Log</span>
<span class="t" style="left:855.80px;top:602.90px;font-size:22.3px;letter-spacing:1.550px;color:#000;">26:13</span>
<span class="t" style="left:941.20px;top:602.90px;font-size:22.3px;letter-spacing:1.600px;color:#000;">LF</span>
<span class="t" style="left:992.80px;top:602.90px;font-size:22.3px;letter-spacing:2.600px;color:#000;">UTF-8</span>
<span class="t" style="left:1091.00px;top:602.90px;font-size:22.3px;letter-spacing:1.814px;color:#000;">4 spaces</span>
<span class="t" style="left:1217.00px;top:602.90px;font-size:22.3px;letter-spacing:1.500px;color:#000;">Python 3.6 (MyProject)</span>
<div class="abs" id="pop"></div>
<svg class="layer" viewBox="0 0 1596 650"><path d="M534,110.2 H955.2 Q962.2,110.2 962.2,117.2 V237 Q962.2,244 955.2,244 H534 Q527,244 527,237 V189.4 L509.8,178.7 L527,168 V117.2 Q527,110.2 534,110.2 Z" fill="#f7f8f8" stroke="#ababab" stroke-width="1.6"/></svg>
<span class="t" style="left:546.00px;top:116.70px;font-size:25.5px;letter-spacing:1.600px;color:#000;">Run 'Car'</span>
<span class="t" style="left:546.00px;top:148.80px;font-size:25.5px;letter-spacing:2.130px;color:#000;">Debug 'Car'</span>
<span class="t" style="left:546.00px;top:180.60px;font-size:25.5px;letter-spacing:1.864px;color:#000;">Run 'Car' with Coverage</span>
<span class="t" style="left:875.80px;top:181.60px;font-size:25px;letter-spacing:0.000px;color:#8f8f8f;font-family:'DejaVu Sans',sans-serif;">^</span>
<span class="t" style="left:890.60px;top:181.60px;font-size:30px;letter-spacing:0.000px;color:#8f8f8f;font-family:'DejaVu Sans',sans-serif;transform:scaleX(1.38);transform-origin:0 0;">⇧</span>
<span class="t" style="left:919.50px;top:181.60px;font-size:24.5px;letter-spacing:0.000px;color:#8f8f8f;">R</span>
<div class="abs" id="edge"></div><div class="abs" id="edge2"></div><div class="abs" id="edge3"></div>
</body></html>
